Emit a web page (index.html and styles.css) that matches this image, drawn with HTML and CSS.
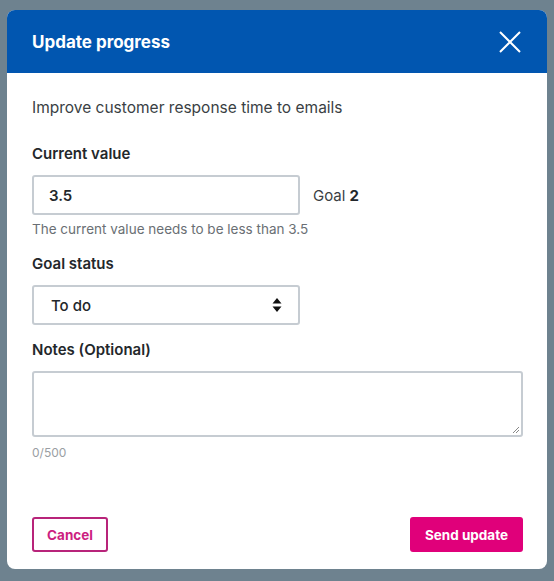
FILE: index.html
```html
<!DOCTYPE html>
<html lang="en">
<head>
<meta charset="utf-8">
<title>Update progress</title>
<link rel="stylesheet" href="styles.css">
</head>
<body>
<div class="dialog">
  <div class="header">
    <h1 class="title">Update progress</h1>
    <button class="close" aria-label="Close">
      <svg width="24" height="24" viewBox="0 0 24 24"><path d="M2 2 L22 22 M22 2 L2 22" stroke="#fff" stroke-width="2" fill="none"/></svg>
    </button>
  </div>
  <div class="body">
    <p class="desc">Improve customer response time to emails</p>
    <div class="field">
      <label class="label">Current value</label>
      <div class="row">
        <div class="input">3.5</div>
        <span class="goal">Goal <b>2</b></span>
      </div>
      <div class="help">The current value needs to be less than 3.5</div>
    </div>
    <div class="field">
      <label class="label">Goal status</label>
      <div class="select">
        <span>To do</span>
        <svg width="10" height="16" viewBox="0 0 10 16"><path d="M5 1 L9.5 6.5 H0.5 Z M5 15 L9.5 9.5 H0.5 Z" fill="#111"/></svg>
      </div>
    </div>
    <div class="field">
      <label class="label">Notes (Optional)</label>
      <div class="textarea">
        <svg class="grip" width="9" height="9" viewBox="0 0 9 9"><path d="M8 2 L2 8 M8 5 L5 8" stroke="#888" stroke-width="1"/></svg>
      </div>
      <div class="count">0/500</div>
    </div>
  </div>
  <div class="footer">
    <button class="btn cancel">Cancel</button>
    <button class="btn send">Send update</button>
  </div>
</div>
</body>
</html>
```

FILE: styles.css
```css
html, body {
  margin: 0;
  padding: 0;
  background: #6e828f;
}
body {
  padding: 10px 7px 12px 7px;
  font-family: Inter, "Noto Sans", sans-serif;
  color: #2a2e33;
}
.dialog {
  width: 540px;
  height: 559px;
  background: #fff;
  border-radius: 8px;
  overflow: hidden;
  display: flex;
  flex-direction: column;
}
.header {
  background: #0156b0;
  height: 63px;
  flex: none;
  display: flex;
  align-items: center;
  justify-content: space-between;
  padding: 0 25px 0 25px;
  box-sizing: border-box;
}
.title {
  margin: 0;
  color: #fff;
  font-size: 17px;
  font-weight: 700;
}
.close {
  background: none;
  border: 0;
  padding: 0;
  width: 24px;
  height: 24px;
  display: flex;
}
.body {
  padding: 25px 24px 0 25px;
  flex: 1;
}
.desc {
  margin: 0 0 26px 0;
  font-size: 15.5px;
  line-height: 20px;
  color: #3a3f44;
}
.field {
  margin-bottom: 15px;
}
.label {
  display: block;
  font-size: 15px;
  line-height: 20px;
  font-weight: 600;
  color: #23272b;
  margin-bottom: 11px;
}
.row {
  display: flex;
  align-items: center;
  gap: 13px;
}
.input, .select {
  width: 268px;
  height: 40px;
  box-sizing: border-box;
  border: 2px solid #c6ccd2;
  border-radius: 3px;
  padding: 0 15px;
  display: flex;
  align-items: center;
  font-size: 15px;
  font-weight: 600;
  color: #23272b;
}
.select {
  justify-content: space-between;
  padding: 0 16px 0 17px;
  font-weight: 500;
}
.goal {
  font-size: 15px;
  color: #3a3f44;
}
.goal b {
  font-weight: 700;
  color: #23272b;
}
.help {
  margin-top: 5px;
  font-size: 13.5px;
  line-height: 19px;
  color: #6a6f74;
}
.textarea {
  height: 66px;
  box-sizing: border-box;
  border: 2px solid #c6ccd2;
  border-radius: 3px;
  position: relative;
}
.grip {
  position: absolute;
  right: 1px;
  bottom: 1px;
}
.count {
  margin-top: 8px;
  font-size: 12px;
  line-height: 16px;
  color: #9a9ea3;
}
.footer {
  flex: none;
  display: flex;
  justify-content: space-between;
  padding: 0 24px 17px 25px;
}
.btn {
  height: 35px;
  border-radius: 3px;
  font-family: inherit;
  font-size: 13.5px;
  font-weight: 700;
  padding: 0;
  white-space: nowrap;
}
.cancel {
  background: #fff;
  border: 2px solid #b8247a;
  color: #cc1f80;
  width: 76px;
}
.send {
  background: #e0007a;
  border: 0;
  color: #fff;
  width: 113px;
}
```
